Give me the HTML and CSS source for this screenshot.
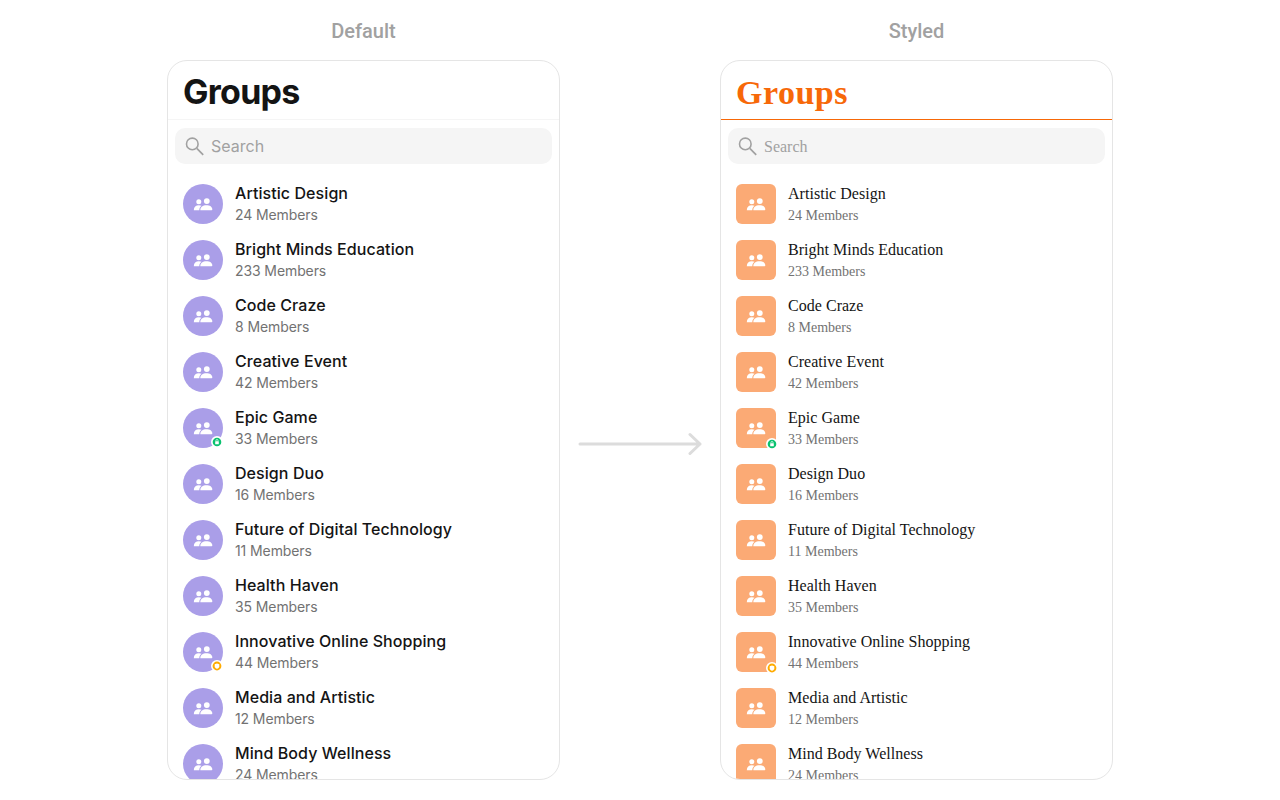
FILE: index.html
```
<!DOCTYPE html>
<html lang="en">
<head>
<meta charset="utf-8">
<title>Groups</title>
<link rel="stylesheet" href="styles.css">
</head>
<body>
<svg class="defs" width="0" height="0">
  <symbol id="people" viewBox="0 0 20 14">
    <circle cx="5.8" cy="4.700" r="2.500"/>
    <circle cx="13.8" cy="4.100" r="2.900"/>
    <path d="M.8 13.200c0-3.400 2-5 5.100-5 1 0 1.900.2 2.600.6C7 9.900 6.300 11.400 6.300 13.200z"/>
    <path d="M7.300 13.200c0-3.500 2.500-5 6-5s6 1.500 6 4.300c0 .5-.2.700-.7.700z"/>
  </symbol>
  <symbol id="search" viewBox="0 0 19 19">
    <path d="M11.800 11.400L18.200 17.800" fill="none" stroke="currentColor" stroke-width="1.700"/>
    <circle cx="7.300" cy="6.900" r="5.800" fill="none" stroke="currentColor" stroke-width="1.600"/>
  </symbol>
  <symbol id="lock" viewBox="0 0 12 12">
    <circle cx="6" cy="6" r="6" fill="#fff"/>
    <circle cx="6" cy="6" r="4.300" fill="#09c26f"/>
    <rect x="4.200" y="5.200" width="3.600" height="3.100" rx=".6" fill="#fff"/>
    <path d="M4.900 5.500V4.600a1.100 1.100 0 0 1 2.200 0v.9" fill="none" stroke="#fff" stroke-width=".7"/>
  </symbol>
  <symbol id="shield" viewBox="0 0 12 12">
    <circle cx="6" cy="6" r="6" fill="#fff"/>
    <circle cx="6" cy="6" r="4.400" fill="#ffab00"/>
    <path d="M6 3.500l2.300.8v1.900c0 1.300-.9 2.100-2.300 2.600-1.400-.5-2.300-1.300-2.300-2.600V4.300z" fill="#fff"/>
  </symbol>
</svg>
<main class="stage">
  <section class="variant">
    <h2 class="caption">Default</h2>
    <div class="panel">
      <h1 class="title">Groups</h1>
      <div class="search"><svg class="search-icon"><use href="#search"/></svg><span class="placeholder">Search</span></div>
      <ul class="list">
        <li class="row"><span class="avatar"><svg class="people"><use href="#people"/></svg></span><div class="info"><div class="name">Artistic Design</div><div class="members">24 Members</div></div></li>
        <li class="row"><span class="avatar"><svg class="people"><use href="#people"/></svg></span><div class="info"><div class="name">Bright Minds Education</div><div class="members">233 Members</div></div></li>
        <li class="row"><span class="avatar"><svg class="people"><use href="#people"/></svg></span><div class="info"><div class="name">Code Craze</div><div class="members">8 Members</div></div></li>
        <li class="row"><span class="avatar"><svg class="people"><use href="#people"/></svg></span><div class="info"><div class="name">Creative Event</div><div class="members">42 Members</div></div></li>
        <li class="row"><span class="avatar"><svg class="people"><use href="#people"/></svg><svg class="badge"><use href="#lock"/></svg></span><div class="info"><div class="name">Epic Game</div><div class="members">33 Members</div></div></li>
        <li class="row"><span class="avatar"><svg class="people"><use href="#people"/></svg></span><div class="info"><div class="name">Design Duo</div><div class="members">16 Members</div></div></li>
        <li class="row"><span class="avatar"><svg class="people"><use href="#people"/></svg></span><div class="info"><div class="name">Future of Digital Technology</div><div class="members">11 Members</div></div></li>
        <li class="row"><span class="avatar"><svg class="people"><use href="#people"/></svg></span><div class="info"><div class="name">Health Haven</div><div class="members">35 Members</div></div></li>
        <li class="row"><span class="avatar"><svg class="people"><use href="#people"/></svg><svg class="badge"><use href="#shield"/></svg></span><div class="info"><div class="name">Innovative Online Shopping</div><div class="members">44 Members</div></div></li>
        <li class="row"><span class="avatar"><svg class="people"><use href="#people"/></svg></span><div class="info"><div class="name">Media and Artistic</div><div class="members">12 Members</div></div></li>
        <li class="row"><span class="avatar"><svg class="people"><use href="#people"/></svg></span><div class="info"><div class="name">Mind Body Wellness</div><div class="members">24 Members</div></div></li>
      </ul>
    </div>
  </section>
  <svg class="arrow" viewBox="0 0 124 24"><path d="M2 12H122M112 2.500L122 12L112 21.500" fill="none" stroke="#dcdcdc" stroke-width="3" stroke-linecap="round" stroke-linejoin="round"/></svg>
  <section class="variant styled">
    <h2 class="caption">Styled</h2>
    <div class="panel">
      <h1 class="title">Groups</h1>
      <div class="search"><svg class="search-icon"><use href="#search"/></svg><span class="placeholder">Search</span></div>
      <ul class="list">
        <li class="row"><span class="avatar"><svg class="people"><use href="#people"/></svg></span><div class="info"><div class="name">Artistic Design</div><div class="members">24 Members</div></div></li>
        <li class="row"><span class="avatar"><svg class="people"><use href="#people"/></svg></span><div class="info"><div class="name">Bright Minds Education</div><div class="members">233 Members</div></div></li>
        <li class="row"><span class="avatar"><svg class="people"><use href="#people"/></svg></span><div class="info"><div class="name">Code Craze</div><div class="members">8 Members</div></div></li>
        <li class="row"><span class="avatar"><svg class="people"><use href="#people"/></svg></span><div class="info"><div class="name">Creative Event</div><div class="members">42 Members</div></div></li>
        <li class="row"><span class="avatar"><svg class="people"><use href="#people"/></svg><svg class="badge"><use href="#lock"/></svg></span><div class="info"><div class="name">Epic Game</div><div class="members">33 Members</div></div></li>
        <li class="row"><span class="avatar"><svg class="people"><use href="#people"/></svg></span><div class="info"><div class="name">Design Duo</div><div class="members">16 Members</div></div></li>
        <li class="row"><span class="avatar"><svg class="people"><use href="#people"/></svg></span><div class="info"><div class="name">Future of Digital Technology</div><div class="members">11 Members</div></div></li>
        <li class="row"><span class="avatar"><svg class="people"><use href="#people"/></svg></span><div class="info"><div class="name">Health Haven</div><div class="members">35 Members</div></div></li>
        <li class="row"><span class="avatar"><svg class="people"><use href="#people"/></svg><svg class="badge"><use href="#shield"/></svg></span><div class="info"><div class="name">Innovative Online Shopping</div><div class="members">44 Members</div></div></li>
        <li class="row"><span class="avatar"><svg class="people"><use href="#people"/></svg></span><div class="info"><div class="name">Media and Artistic</div><div class="members">12 Members</div></div></li>
        <li class="row"><span class="avatar"><svg class="people"><use href="#people"/></svg></span><div class="info"><div class="name">Mind Body Wellness</div><div class="members">24 Members</div></div></li>
      </ul>
    </div>
  </section>
</main>
</body>
</html>
```

FILE: styles.css
```
* { box-sizing: border-box; }
body { margin: 0; background: #fff; font-family: Inter, "Liberation Sans", sans-serif; }
.defs { display: block; height: 0; }
.stage { display: flex; justify-content: center; gap: 18px; height: 800px; overflow: hidden; }
.variant { width: 393px; padding-top: 16px; }
.caption { margin: 0 0 14px; height: 30px; text-align: center; font: 500 20px/30px Roboto, sans-serif; color: #a1a1a1; }
.panel { height: 720px; border: 1px solid #e5e5e5; border-radius: 20px; overflow: hidden; background: #fff; }
.title { margin: 0; height: 59px; padding: 0 15px; border-bottom: 1px solid #f5f5f5; font-size: 34px; line-height: 62px; font-weight: 650; letter-spacing: -0.75px; color: #141414; }
.search { display: flex; align-items: center; gap: 7px; height: 36px; margin: 8px 7px 12px; padding: 0 10px; border-radius: 10px; background: #f5f5f5; color: #a1a1a1; }
.search-icon { width: 19px; height: 19px; }
.placeholder { font-size: 16px; line-height: 36px; }
.list { margin: 0; padding: 0; list-style: none; }
.row { display: flex; align-items: center; gap: 12px; height: 56px; padding: 0 15px; }
.avatar { position: relative; display: flex; align-items: center; justify-content: center; flex: none; width: 40px; height: 40px; border-radius: 50%; background: #aa9ee8; }
.people { width: 20px; height: 14px; fill: #fff; }
.badge { position: absolute; right: 0; bottom: 0; width: 12px; height: 12px; }
.name { font-size: 16px; line-height: 20px; font-weight: 500; letter-spacing: 0.07px; color: #141414; white-space: nowrap; }
.members { padding-top: 2px; font-size: 14px; line-height: 20px; letter-spacing: -0.1px; color: #727272; }
.arrow { flex: none; align-self: flex-start; width: 124px; height: 24px; margin-top: 432px; }
.styled .panel { font-family: "Liberation Serif", "Times New Roman", serif; }
.styled .title { line-height: 64px; border-bottom-color: #f76808; color: #f76808; font-weight: 700; letter-spacing: 0.5px; }
.styled .placeholder { padding-top: 1px; }
.styled .avatar { border-radius: 6px; background: #fbaa75; }
.styled .badge { right: -2px; bottom: -2px; }
.styled .name { padding-top: 1px; line-height: 22px; font-weight: 400; letter-spacing: 0.03px; }
.styled .members { letter-spacing: 0; padding-top: 0; line-height: 21px; }
```
